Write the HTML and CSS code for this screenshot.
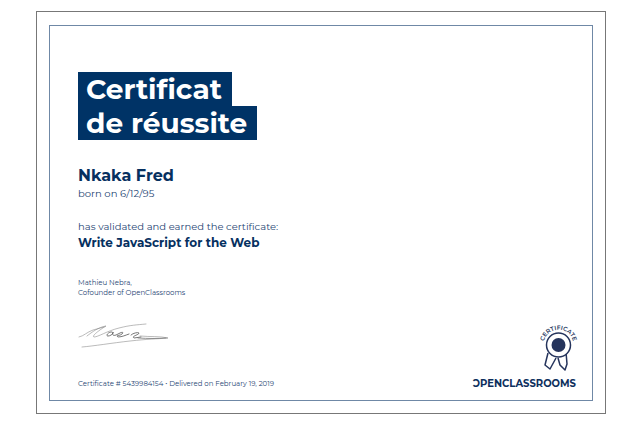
FILE: index.html
```html
<!DOCTYPE html>
<html lang="fr">
<head>
<meta charset="utf-8">
<title>Certificat de réussite</title>
<meta name="viewport" content="width=device-width, initial-scale=1">
<link rel="stylesheet" href="styles.css">
</head>
<body>
<main class="page">
  <article class="certificate">
    <h1 class="title"><span class="title-line">Certificat</span><span class="title-line">de réussite</span></h1>
    <section class="holder">
      <h2 class="name">Nkaka Fred</h2>
      <p class="detail">born on 6/12/95</p>
    </section>
    <section class="award">
      <p class="detail">has validated and earned the certificate:</p>
      <h3 class="course">Write JavaScript for the Web</h3>
    </section>
    <p class="signer">Mathieu Nebra,<br>Cofounder of OpenClassrooms</p>
    <footer class="footer">
      <div class="signed">
        <svg class="signature" viewBox="0 0 92 28" role="img" aria-label="Signature" fill="none" stroke="#777" stroke-linecap="round" stroke-linejoin="round">
          <path stroke-width=".5" d="M1 13C6 12 9 8 15 6L26 3M9 12C14 8 21 3 28 2C23 5 13 12 16 13C20 13 29 7 41 4S58 1 68 0"/>
          <path stroke-width=".8" stroke="#555" d="M34 8C31 7 27 12 30 12C33 12 36 9 35 8C34 11 35 12 38 11L42 9C44 8 46 8 44 10C42 12 37 11 40 13C44 13 48 11 51 10M53 11C55 9 60 8 61 9C61 11 53 12 56 14L63 13"/>
          <path stroke-width=".5" d="M4 23C16 22 34 19 52 17S78 15 90 14C82 12 72 13 62 12"/>
          <path stroke-width=".8" d="M60 14Q76 15 88 14"/>
        </svg>
        <p class="reference">Certificate # 5439984154 • Delivered on February 19, 2019</p>
      </div>
      <div class="brand">
        <svg class="badge" viewBox="0 0 40 48" role="img" aria-label="Certificate badge">
          <defs><path id="arc" d="M10 29A15 15 0 1 1 35 29"/></defs>
          <g fill="#fff" stroke="#25345c" stroke-width="1.500" stroke-linejoin="round">
            <path d="M12 29L9 41L14 45L20 34"/>
            <path d="M22 34L24 41L29 46L31 40L30 28"/>
            <circle cx="22.500" cy="21" r="12"/>
          </g>
          <circle cx="22.500" cy="21" r="7" fill="#25345c"/>
          <text class="badge-text"><textPath href="#arc" startOffset="50%" text-anchor="middle">CERTIFICATE</textPath></text>
        </svg>
        <p class="wordmark">ƆPENCLASSROOMS</p>
      </div>
    </footer>
  </article>
</main>
</body>
</html>
```
FILE: styles.css
```css
* { box-sizing: border-box; }

body {
  margin: 0;
  background: #fff;
  color: #1f4674;
  font-family: Montserrat, Inter, "Open Sans", sans-serif;
}

h1, h2, h3, p { margin: 0; }

.page {
  display: flex;
  min-height: calc(100vh - 22px);
  margin: 11px 34px 11px 36px;
  padding: 13px 12px 12px;
  border: 1px solid #777;
}

.certificate {
  display: flex;
  flex: 1;
  flex-direction: column;
  padding: 46px 16px 8px 28px;
  border: 1px solid #6f88a6;
}

.title {
  display: flex;
  flex-direction: column;
  align-items: flex-start;
  color: #fff;
  font-size: 28px;
  font-weight: 700;
  line-height: 34px;
}

.title-line {
  padding: 0 10px 0 8px;
  background: #003366;
}

.holder { margin-top: 26px; }

.name {
  color: #06305f;
  font-size: 16px;
  line-height: 20px;
}

.detail {
  font-size: 10px;
  line-height: 16px;
}

.award { margin-top: 17px; }

.course {
  color: #06305f;
  font-size: 12px;
  line-height: 16px;
}

.signer {
  margin-top: 27px;
  font-size: 7px;
  line-height: 10px;
}

.footer {
  display: flex;
  align-items: flex-end;
  justify-content: space-between;
  margin-top: auto;
}

.signature {
  display: block;
  width: 92px;
  height: 28px;
  margin-bottom: 24px;
  overflow: visible;
}

.reference {
  font-size: 7px;
  line-height: 16px;
}

.brand {
  display: flex;
  flex-direction: column;
  align-items: flex-end;
}

.badge {
  width: 40px;
  height: 48px;
  margin-bottom: 4px;
  overflow: visible;
}

.badge-text {
  fill: #25345c;
  font-size: 6px;
  font-weight: 600;
}

.wordmark {
  color: #0d2f5d;
  font-size: 10px;
  font-weight: 700;
  line-height: 16px;
}
```
